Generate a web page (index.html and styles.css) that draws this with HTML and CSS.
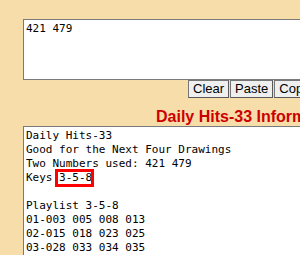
FILE: index.html
```html
<!DOCTYPE html>
<html lang="en">
<head>
    <meta charset="UTF-8">
    <title>Daily Hits-33</title>
    <link rel="stylesheet" href="styles.css">
</head>
<body>
    <div class="page">
        <textarea class="numbers" id="numbers">421 479</textarea>
        <div class="buttons">
            <button class="clear">Clear</button>
            <button class="paste">Paste</button>
            <button class="copy">Copy</button>
        </div>
        <h2 class="title">Daily Hits-33 Information</h2>
        <div class="result-box">
            <textarea class="result" id="result">Daily Hits-33
Good for the Next Four Drawings
Two Numbers used: 421 479
Keys 3-5-8

Playlist 3-5-8
01-003 005 008 013
02-015 018 023 025
03-028 033 034 035
04-038 043 045 048
05-055 058 063 065</textarea>
            <div class="mark"></div>
        </div>
    </div>
</body>
</html>
```

FILE: styles.css
```css
html {
    overflow: hidden;
}
body {
    margin: 0;
    background-color: #f7dda9;
    font-family: "Liberation Sans", Arial, sans-serif;
}
.page {
    width: 480px;
    padding: 19px 0 0 23px;
}
.numbers, .result {
    display: block;
    box-sizing: border-box;
    width: 420px;
    margin: 0;
    padding: 2px;
    border: 1px solid #7a7a7a;
    background: #fff;
    color: #000;
    font-family: "DejaVu Sans Mono", monospace;
    font-size: 11px;
    line-height: 14px;
    resize: none;
    overflow: hidden;
}
.numbers {
    height: 61px;
}
.buttons {
    display: flex;
    gap: 1px;
    margin-left: 165px;
}
.buttons button {
    height: 18px;
    margin: 0;
    padding: 0 4px;
    border: 1px solid #767676;
    border-right-color: #5a5a5a;
    border-bottom-color: #5a5a5a;
    background-color: #efefef;
    font-family: "Liberation Sans", Arial, sans-serif;
    font-size: 13px;
    line-height: 16px;
    color: #000;
}
.title {
    margin: 10px 0 0 133px;
    font-size: 16px;
    line-height: 18px;
    font-weight: bold;
    color: #cc0000;
    white-space: nowrap;
}
.result-box {
    position: relative;
}
.result {
    height: 200px;
}
.mark {
    position: absolute;
    left: 32px;
    top: 43px;
    width: 39px;
    height: 18px;
    box-sizing: border-box;
    border: 3px solid #ff0000;
}
```
